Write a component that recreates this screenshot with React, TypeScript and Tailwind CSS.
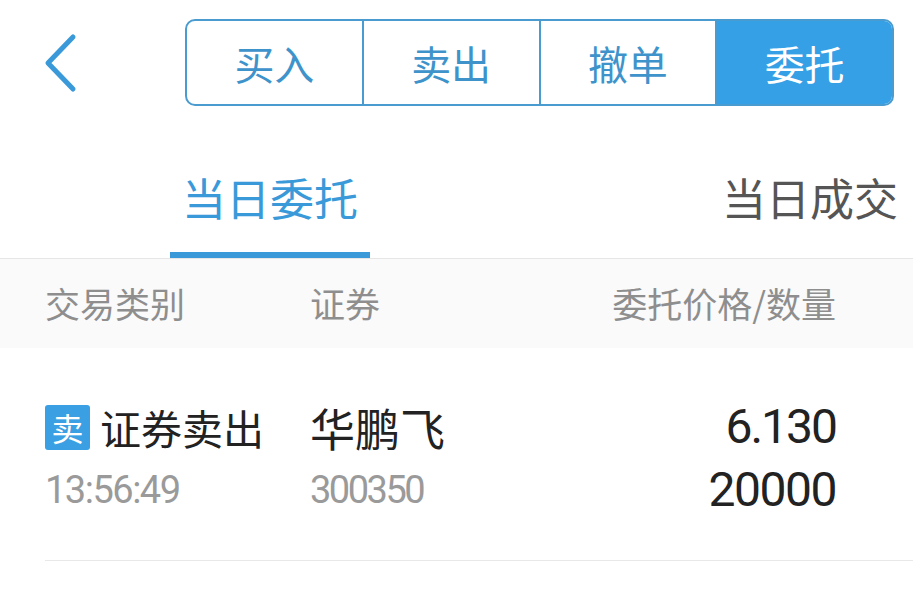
import { useState } from 'react';

const cjk = "font-['Noto_Sans_CJK_SC','Noto_Sans',sans-serif]";
const num = "font-['Roboto','Noto_Sans',sans-serif]";

const segments = ['买入', '卖出', '撤单', '委托'];

const App = () => {
  const [active, setActive] = useState(3);

  return (
    <div className={`w-[913px] h-[596px] overflow-hidden bg-white ${cjk}`}>
      {/* 顶部栏 */}
      <div className="flex items-center h-[125px]">
        <button className="w-[185px] h-full flex items-center pl-[42px]" aria-label="返回">
          <svg width="40" height="62" viewBox="0 0 40 62" fill="none">
            <path d="M31 5 L6 31 L31 57" stroke="#3a9ad9" strokeWidth="5" strokeLinecap="round" strokeLinejoin="round" />
          </svg>
        </button>
        <div className="flex w-[709px] h-[87px] border-2 border-[#4a9bd0] rounded-[10px] overflow-hidden">
          {segments.map((s, i) => (
            <button
              key={s}
              onClick={() => setActive(i)}
              className={`flex-1 flex items-center justify-center text-[40px] leading-none ${
                i > 0 ? 'border-l-2 border-[#4a9bd0]' : ''
              } ${i === active ? 'bg-[#35a0e5] text-white' : 'text-[#3f93cb]'}`}
            >
              {s}
            </button>
          ))}
        </div>
      </div>

      {/* 当日委托 / 当日成交 */}
      <div className="flex w-[1080px] h-[134px] border-b border-[#e6e6e6]">
        <div className="w-[540px] flex flex-col items-center justify-between pt-[48px]">
          <span className="text-[44px] leading-[48px] text-[#3a9ad9]">当日委托</span>
          <div className="w-[200px] h-[6px] bg-[#3a9ad9]" />
        </div>
        <div className="w-[540px] flex flex-col items-center pt-[48px]">
          <span className="text-[44px] leading-[48px] text-[#555555]">当日成交</span>
        </div>
      </div>

      {/* 表头 */}
      <div className="grid grid-cols-[265px_1fr_auto] items-center h-[89px] bg-[#fafafa] pl-[45px] pr-[77px] text-[35px] text-[#8e8e8e]">
        <span>交易类别</span>
        <span>证券</span>
        <span>委托价格/数量</span>
      </div>

      {/* 委托记录 */}
      <div className="ml-[45px] border-b border-[#e8e8e8] pt-[54px] pb-[45px] pr-[77px]">
        <div className="grid grid-cols-[265px_1fr_auto] items-center h-[50px]">
          <div className="flex items-center gap-[10px]">
            <span className="w-[45px] h-[45px] rounded-[3px] bg-[#3a9fe3] text-white text-[32px] leading-none flex items-center justify-center">
              卖
            </span>
            <span className="text-[41px] leading-none text-[#222222]">证券卖出</span>
          </div>
          <span className="text-[45px] leading-none text-[#222222]">华鹏飞</span>
          <span className={`${num} text-[48px] leading-none tracking-[-2px] text-[#222222] text-right`}>6.130</span>
        </div>
        <div className="grid grid-cols-[265px_1fr_auto] items-center h-[50px] mt-[13px]">
          <span className={`${num} text-[38px] leading-none tracking-[-1.5px] text-[#9a9a9a]`}>13:56:49</span>
          <span className={`${num} text-[38px] leading-none tracking-[-2.5px] text-[#9a9a9a]`}>300350</span>
          <span className={`${num} text-[48px] leading-none tracking-[-1.5px] text-[#222222] text-right`}>20000</span>
        </div>
      </div>
    </div>
  );
};

export default App;
